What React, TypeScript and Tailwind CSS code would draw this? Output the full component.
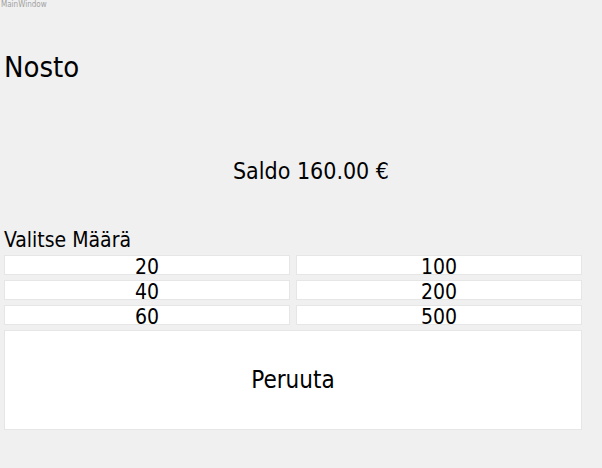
export default function App() {
  const amounts = [
    ["20", "100"],
    ["40", "200"],
    ["60", "500"],
  ];

  return (
    <div className="w-[602px] h-[468px] bg-[#f0f0f0] text-black flex flex-col font-['DejaVu_Sans_Condensed','DejaVu_Sans',sans-serif] font-stretch-condensed overflow-hidden">
      {/* window title */}
      <div className="h-[12px] pl-[1px] text-[8px] leading-[10px] text-[#a0a0a0]">MainWindow</div>

      <div className="pl-[4px] pr-[20px] flex flex-col">
        <h1 className="mt-[38px] text-[29px] leading-[34px]">Nosto</h1>

        <div className="mt-[73px] pl-[36px] text-center text-[23px] leading-[28px]">Saldo 160.00 €</div>

        <div className="mt-[43px] text-[21px] leading-[24px]">Valitse Määrä</div>

        <div className="mt-[3px] grid grid-cols-2 gap-x-[6px] gap-y-[5px]">
          {amounts.map(([a, b]) => (
            <>
              <button key={a} className="h-[20px] bg-white border border-[#e6e6e6] text-[21px] leading-[18px] pt-[2px]">{a}</button>
              <button key={b} className="h-[20px] bg-white border border-[#e6e6e6] text-[21px] leading-[18px] pt-[2px]">{b}</button>
            </>
          ))}
        </div>

        <button className="mt-[5px] h-[100px] bg-white border border-[#e6e6e6] text-[24px]">Peruuta</button>
      </div>
    </div>
  );
}
